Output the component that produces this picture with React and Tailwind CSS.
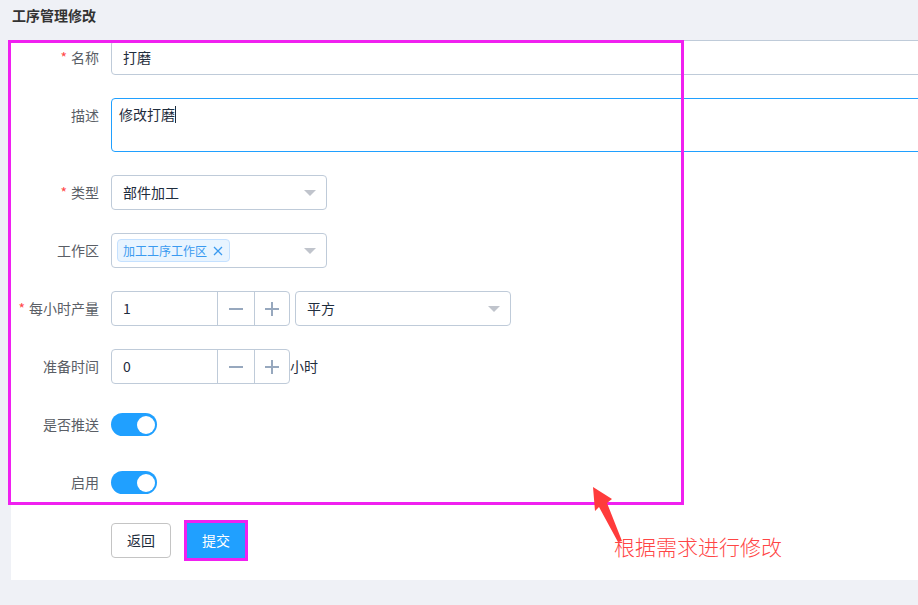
import React from "react";

const Label = ({ req, children }) => (
  <div className="w-[100px] shrink-0 pr-[12px] text-right h-[35px] leading-[35px] text-[14px] text-[#5a5e66]">
    {req && <span className="text-[#ff4949] mr-[4px]">*</span>}
    {children}
  </div>
);

const Arrow = () => (
  <div className="w-0 h-0 border-l-[6px] border-r-[6px] border-t-[6px] border-l-transparent border-r-transparent border-t-[#c0c4cc]" />
);

const Minus = () => (
  <svg width="16" height="16" viewBox="0 0 16 16">
    <rect x="1" y="7" width="14" height="2" fill="#97a8be" />
  </svg>
);
const Plus = () => (
  <svg width="16" height="16" viewBox="0 0 16 16">
    <rect x="1" y="7" width="14" height="2" fill="#97a8be" />
    <rect x="7" y="1" width="2" height="14" fill="#97a8be" />
  </svg>
);

const NumberInput = ({ value }) => (
  <div className="flex w-[179px] h-[35px] border border-[#bfcbd9] rounded-[4px] shrink-0">
    <div className="w-[105px] pl-[11px] leading-[33px] text-[14px] text-[#1f2d3d]">{value}</div>
    <div className="w-[37px] border-l border-[#bfcbd9] flex items-center justify-center">
      <Minus />
    </div>
    <div className="flex-1 border-l border-[#bfcbd9] flex items-center justify-center">
      <Plus />
    </div>
  </div>
);

const Switch = () => (
  <div className="h-[35px] flex items-center">
    <div className="w-[46px] h-[23px] rounded-full bg-[#20a0ff] flex items-center justify-end pr-[2px]">
      <div className="w-[18px] h-[18px] rounded-full bg-white" />
    </div>
  </div>
);

export default function App() {
  return (
    <div className="relative w-[918px] h-[605px] overflow-hidden bg-[#eff1f6] [font-family:'Noto_Sans_CJK_SC',sans-serif]">
      <div className="h-[40px] pl-[12px] pt-[6px] text-[14px] leading-[18px] font-bold text-[#333]">工序管理修改</div>
      <div className="ml-[11px] h-[540px] bg-white overflow-hidden flex flex-col gap-[23px]">
        <div className="flex">
          <Label req>名称</Label>
          <div className="w-[840px] shrink-0 h-[35px] border border-[#bfcbd9] rounded-[4px] pl-[11px] leading-[33px] text-[14px] text-[#1f2d3d]">打磨</div>
        </div>
        <div className="flex">
          <Label>描述</Label>
          <div className="w-[840px] shrink-0 h-[54px] border border-[#20a0ff] rounded-[4px] pl-[7px] pt-[5px] leading-[20px] text-[14px] text-[#1f2d3d] flex items-start">
            <span>修改打磨</span>
            <span className="inline-block w-px h-[17px] mt-[2px] bg-[#1f2d3d]" />
          </div>
        </div>
        <div className="flex">
          <Label req>类型</Label>
          <div className="w-[216px] h-[35px] border border-[#bfcbd9] rounded-[4px] pl-[11px] pr-[10px] flex items-center justify-between text-[14px] text-[#1f2d3d]">
            <span>部件加工</span>
            <Arrow />
          </div>
        </div>
        <div className="flex">
          <Label>工作区</Label>
          <div className="w-[216px] h-[35px] border border-[#bfcbd9] rounded-[4px] pl-[5px] pr-[10px] flex items-center justify-between">
            <div className="h-[23px] w-[113px] rounded-[4px] bg-[#e8f4ff] border border-[#c5e1ff] flex items-center pl-[5px] text-[12px] text-[#3a9af0]">
              <span>加工工序工作区</span>
              <svg className="ml-[6px]" width="10" height="10" viewBox="0 0 10 10">
                <path d="M1 1 L9 9 M9 1 L1 9" stroke="#3a9af0" strokeWidth="1.3" />
              </svg>
            </div>
            <Arrow />
          </div>
        </div>
        <div className="flex">
          <Label req>每小时产量</Label>
          <div className="flex gap-[5px]">
            <NumberInput value="1" />
            <div className="w-[216px] h-[35px] border border-[#bfcbd9] rounded-[4px] pl-[11px] pr-[10px] flex items-center justify-between text-[14px] text-[#1f2d3d]">
              <span>平方</span>
              <Arrow />
            </div>
          </div>
        </div>
        <div className="flex">
          <Label>准备时间</Label>
          <NumberInput value="0" />
          <span className="leading-[35px] text-[14px] text-[#1f2d3d]">小时</span>
        </div>
        <div className="flex">
          <Label>是否推送</Label>
          <Switch />
        </div>
        <div className="flex">
          <Label>启用</Label>
          <Switch />
        </div>
        <div className="flex pl-[100px] gap-[16px]">
          <div className="w-[60px] h-[35px] border border-[#c4c4c4] rounded-[4px] flex items-center justify-center text-[14px] text-[#1f2d3d]">返回</div>
          <div className="w-[58px] h-[35px] bg-[#20a0ff] rounded-none flex items-center justify-center text-[14px] text-white outline-[3px] outline-solid outline-[#f020f0]">提交</div>
        </div>
      </div>

      {/* annotation overlays */}
      <div className="absolute left-[8px] top-[40px] w-[676px] h-[465px] border-[3px] border-[#f020f0] pointer-events-none" />
      <svg className="absolute left-0 top-0 pointer-events-none" width="918" height="605">
        <polygon points="593,487 612,499 607,503 622,541 618,542 599,507 595,511" fill="#ff3b3b" />
      </svg>
      <div className="absolute left-[614px] top-[535px] text-[21px] leading-[22px] font-light text-[#ff4545]">根据需求进行修改</div>
    </div>
  );
}
